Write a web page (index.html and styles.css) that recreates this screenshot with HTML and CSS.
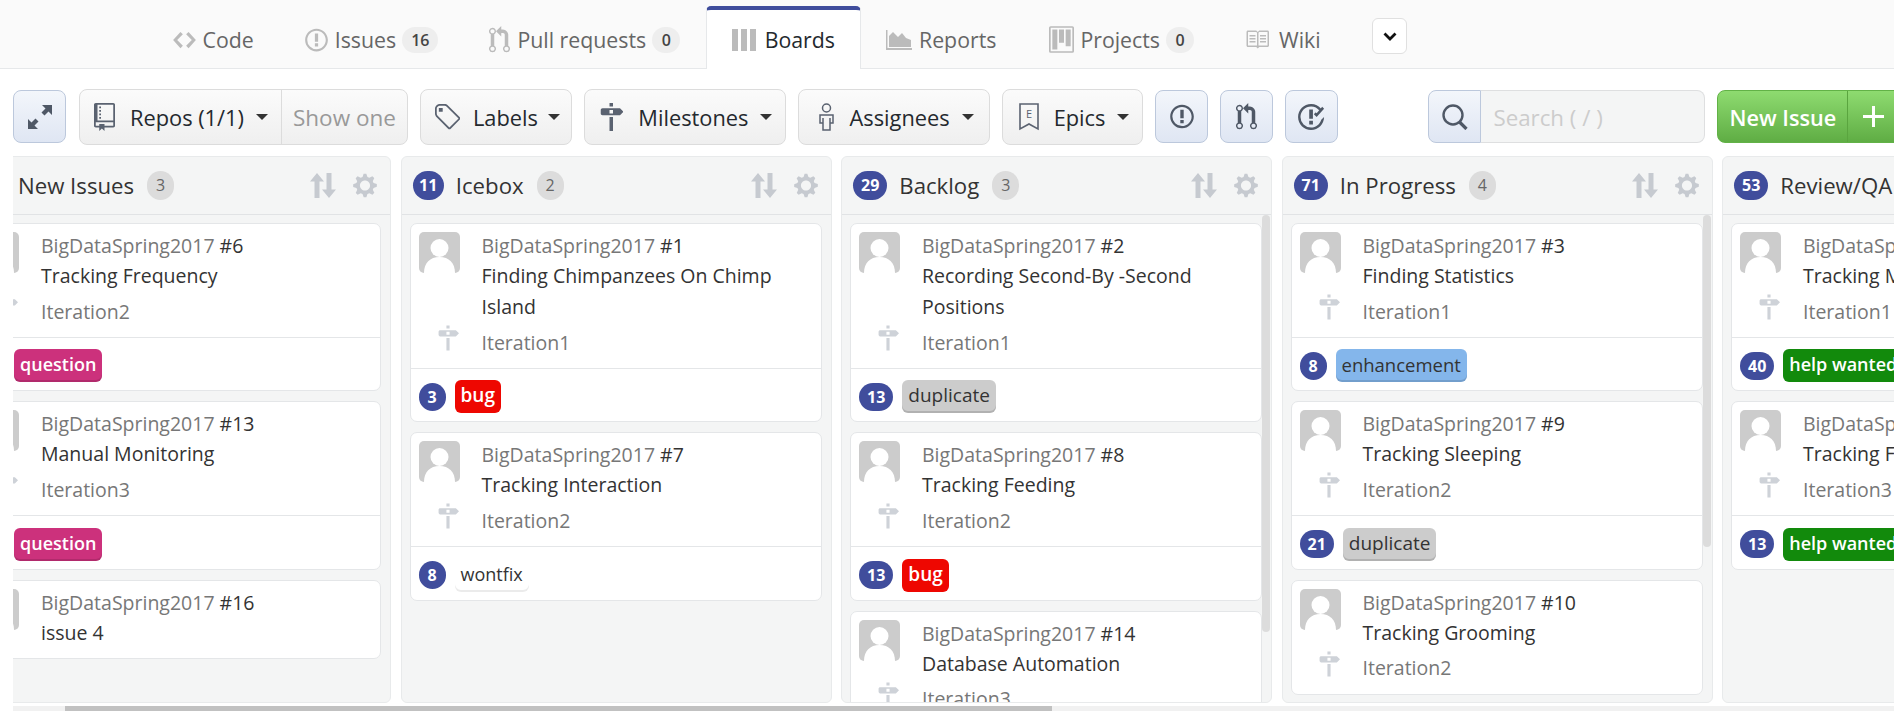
FILE: index.html
```html
<!DOCTYPE html>
<html lang="en">
<head>
  <meta charset="UTF-8">
  <title>Boards</title>
  <link rel="stylesheet" href="styles.css">
</head>
<body>

  <svg class="sprite" width="0" height="0">
    <symbol id="i-code" viewBox="0 0 14 16"><path d="M9.5 3L8 4.5 11.5 8 8 11.5 9.5 13 14 8 9.5 3zm-5 0L0 8l4.5 5L6 11.5 2.5 8 6 4.5 4.5 3z"/></symbol>
    <symbol id="i-issue" viewBox="0 0 14 16"><path d="M7 2.3c3.14 0 5.7 2.56 5.7 5.7s-2.56 5.7-5.7 5.7A5.71 5.71 0 0 1 1.3 8c0-3.14 2.56-5.7 5.7-5.7zM7 1C3.14 1 0 4.14 0 8s3.14 7 7 7 7-3.14 7-7-3.14-7-7-7zm1 3H6v5h2V4zm0 6H6v2h2v-2z"/></symbol>
    <symbol id="i-pull" viewBox="0 0 12 16"><path d="M11 11.28V5c-.03-.78-.34-1.47-.94-2.06C9.46 2.35 8.78 2.03 8 2H7V0L4 3l3 3V4h1c.27.02.48.11.69.31.21.2.3.42.31.69v6.28A1.993 1.993 0 0 0 10 15a1.993 1.993 0 0 0 1-3.72zm-1 2.92c-.66 0-1.2-.55-1.2-1.2 0-.65.55-1.2 1.2-1.2.65 0 1.2.55 1.2 1.2 0 .65-.55 1.2-1.2 1.2zM4 3c0-1.11-.89-2-2-2a1.993 1.993 0 0 0-1 3.72v6.56A1.993 1.993 0 0 0 2 15a1.993 1.993 0 0 0 1-3.72V4.72c.59-.34 1-.98 1-1.72zm-.8 10c0 .66-.55 1.2-1.2 1.2-.65 0-1.2-.55-1.2-1.2 0-.65.55-1.2 1.2-1.2.65 0 1.2.55 1.2 1.2zM2 4.2C1.34 4.2.8 3.65.8 3c0-.65.55-1.2 1.2-1.2.65 0 1.2.55 1.2 1.2 0 .65-.55 1.2-1.2 1.2z"/></symbol>
    <symbol id="i-boards" viewBox="0 0 24 22"><path d="M0 0h6v22H0zM9 0h6v22H9zM18 0h6v22h-6z"/></symbol>
    <symbol id="i-graph" viewBox="0 0 26 20"><path d="M0 0h1.500v18H26v2H0z"/><path d="M3 17V6l4-4 5 5 4-4 4 5 5 2v7z"/></symbol>
    <symbol id="i-project" viewBox="0 0 15 16"><path fill-rule="evenodd" d="M10 12h3V2h-3v10zm-4-2h3V2H6v8zm-4 4h3V2H2v12zm-1 1h13V1H1v14zM14 0H1a1 1 0 0 0-1 1v14a1 1 0 0 0 1 1h13a1 1 0 0 0 1-1V1a1 1 0 0 0-1-1z"/></symbol>
    <symbol id="i-book" viewBox="0 1 16 14"><path d="M3 5h4v1H3V5zm0 3h4V7H3v1zm0 2h4V9H3v1zm11-5h-4v1h4V5zm0 2h-4v1h4V7zm0 2h-4v1h4V9zm2-6v9c0 .55-.45 1-1 1H9.500l-1 1-1-1H2c-.55 0-1-.45-1-1V3c0-.55.45-1 1-1h5.500l1 1 1-1H15c.55 0 1 .45 1 1zm-8 .5L7.500 3H2v9h6V3.500zm7-.5H9.500l-.5.5V12h6V3z"/></symbol>
    <symbol id="i-repo" viewBox="0 0 12 16"><path d="M4 9H3V8h1v1zm0-3H3v1h1V6zm0-2H3v1h1V4zm0-2H3v1h1V2zm8-1v12c0 .55-.45 1-1 1H6v2l-1.500-1.500L3 16v-2H1c-.55 0-1-.45-1-1V1c0-.55.45-1 1-1h10c.55 0 1 .45 1 1zm-1 10H1v2h2v-1h3v1h5v-2zm0-10H2v9h9V1z"/></symbol>
    <symbol id="i-tag" viewBox="1 1 13 14"><path d="M7.730 1.730C7.260 1.260 6.620 1 5.960 1H3.500C2.130 1 1 2.130 1 3.500v2.470c0 .66.27 1.300.73 1.770l6.060 6.060c.39.39 1.020.39 1.410 0l4.590-4.590a.996.996 0 0 0 0-1.410L7.730 1.730zM2.380 7.090c-.31-.3-.47-.7-.47-1.130V3.500c0-.88.72-1.590 1.590-1.590h2.470c.42 0 .83.16 1.130.47l6.140 6.130-4.730 4.730-6.130-6.150zM3.010 3h2v2H3V3h.01z"/></symbol>
    <symbol id="i-milestone" viewBox="0 0 14 16"><path d="M8 2H6V0h2v2zm4 5H2c-.55 0-1-.45-1-1V4c0-.55.45-1 1-1h10l2 2-2 2zM8 4H6v2h2V4zM6 16h2V8H6v8z"/></symbol>
    <symbol id="i-person" viewBox="0 0 15 28"><g fill="none" stroke="currentColor" stroke-width="1.500"><circle cx="7.500" cy="5" r="4"/><path d="M1 12h13v8h-3v7H4v-7H1zM4 15v5M11 15v5"/></g></symbol>
    <symbol id="i-expand" viewBox="0 0 26 26"><path d="M15 1h10v10l-3.500-3.500-4 4-3-3 4-4zM11 25H1V15l3.500 3.500 4-4 3 3-4 4z"/></symbol>
    <symbol id="i-closed" viewBox="1 1 15 14"><path d="M7 10h2v2H7v-2zm2-6H7v5h2V4zm1.500 1.500l-1 1L11 8l4-4.500-1-1-3 3.500-1.500-1.500zM8 13.700A5.710 5.710 0 0 1 2.300 8c0-3.140 2.560-5.700 5.700-5.700 1.830 0 3.450.88 4.500 2.200l.92-.92A6.947 6.947 0 0 0 8 1C4.140 1 1 4.140 1 8s3.140 7 7 7 7-3.140 7-7l-1.520 1.520c-.66 2.410-2.860 4.190-5.480 4.190v-.01z"/></symbol>
    <symbol id="i-search" viewBox="0 0 26 26"><g fill="none" stroke="currentColor"><circle cx="11" cy="11" r="9.500" stroke-width="2.400"/><path d="M17.500 18l7 7" stroke-width="3.200"/></g></symbol>
    <symbol id="i-sort" viewBox="0 0 26 25"><path d="M7 0l7 8.500H9.500V25h-5V8.500H0zM19 25l7-8.500h-4.500V0h-5v16.500H12z"/></symbol>
    <symbol id="i-gear" viewBox="0 0 14 16"><path d="M14 8.770v-1.600l-1.940-.64-.45-1.090.88-1.840-1.130-1.130-1.810.91-1.090-.45-.69-1.920h-1.600l-.63 1.940-1.110.45-1.840-.88-1.130 1.130.91 1.810-.45 1.090L0 7.230v1.590l1.940.64.45 1.090-.88 1.840 1.130 1.130 1.810-.91 1.090.45.69 1.920h1.590l.63-1.940 1.110-.45 1.840.88 1.130-1.130-.92-1.810.47-1.090L14 8.750v.02zM7 11c-1.660 0-3-1.340-3-3s1.340-3 3-3 3 1.340 3 3-1.340 3-3 3z"/></symbol>
    <symbol id="i-avatar" viewBox="0 0 41 41"><rect width="41" height="41" rx="5" fill="#ccc"/><circle cx="20.500" cy="16" r="9" fill="#fff"/><path d="M5 41c0-10 6-16 15.500-16S36 31 36 41z" fill="#fff"/></symbol>
  </svg>

  <nav class="tabs">
    <a class="tab"><svg class="tab-icon w-code"><use href="#i-code"/></svg>Code</a>
    <a class="tab"><svg class="tab-icon w-issue"><use href="#i-issue"/></svg>Issues<span class="tab-count">16</span></a>
    <a class="tab"><svg class="tab-icon w-pull"><use href="#i-pull"/></svg>Pull requests<span class="tab-count">0</span></a>
    <a class="tab active"><svg class="tab-icon w-boards"><use href="#i-boards"/></svg>Boards</a>
    <a class="tab"><svg class="tab-icon w-graph"><use href="#i-graph"/></svg>Reports</a>
    <a class="tab"><svg class="tab-icon w-project"><use href="#i-project"/></svg>Projects<span class="tab-count">0</span></a>
    <a class="tab"><svg class="tab-icon w-book"><use href="#i-book"/></svg>Wiki</a>
    <button class="tab-more"><svg width="14" height="9" viewBox="0 0 14 9"><path d="M1.500 1.500L7 7l5.500-5.500" fill="none" stroke="#111" stroke-width="2.800"/></svg></button>
  </nav>

  <div class="toolbar">
    <button class="icon-btn expand-btn"><svg class="ic-expand"><use href="#i-expand"/></svg></button>
    <div class="btn repos">
      <span class="btn-main"><svg class="ic-repo"><use href="#i-repo"/></svg><span>Repos (1/1)</span><i class="caret"></i></span>
      <span class="btn-side">Show one</span>
    </div>
    <div class="btn"><span class="btn-main labels-main"><svg class="ic-tag"><use href="#i-tag"/></svg><span>Labels</span><i class="caret"></i></span></div>
    <div class="btn"><span class="btn-main"><svg class="ic-ms"><use href="#i-milestone"/></svg><span>Milestones</span><i class="caret"></i></span></div>
    <div class="btn"><span class="btn-main assignees-main"><svg class="ic-person"><use href="#i-person"/></svg><span>Assignees</span><i class="caret"></i></span></div>
    <div class="btn"><span class="btn-main">
      <svg class="ic-epic" viewBox="0 0 20 28"><path d="M1 1h18v25l-9-5-9 5z" fill="none" stroke="#5a6270" stroke-width="1.600"/><text x="10" y="15" text-anchor="middle" class="epic-letter">E</text></svg>
      <span>Epics</span><i class="caret"></i></span></div>
    <button class="icon-btn"><svg class="ic-issue"><use href="#i-issue"/></svg></button>
    <button class="icon-btn"><svg class="ic-pull"><use href="#i-pull"/></svg></button>
    <button class="icon-btn"><svg class="ic-closed"><use href="#i-closed"/></svg></button>
    <div class="search">
      <span class="search-icon"><svg class="ic-search"><use href="#i-search"/></svg></span>
      <span class="search-box">Search ( / )</span>
    </div>
    <div class="new-issue">
      <span class="new-text">New Issue</span>
      <span class="new-plus"><svg width="21" height="21" viewBox="0 0 21 21"><path d="M9 0h3v9h9v3h-9v9H9v-9H0V9h9z" fill="#fff"/></svg></span>
    </div>
  </div>

  <div class="board">

    <section class="column">
      <header class="col-head"><span class="pill pill-wide"></span><h3>New Issues</h3><span class="col-count">3</span><span class="col-tools"><svg class="ic-sort"><use href="#i-sort"/></svg><svg class="ic-gear"><use href="#i-gear"/></svg></span></header>
      <div class="cards">
        <article class="card">
          <div class="card-body">
            <svg class="avatar"><use href="#i-avatar"/></svg>
            <div class="card-text"><div class="repo">BigDataSpring2017 <b>#6</b></div><div class="title">Tracking Frequency</div></div>
            <svg class="ms-icon"><use href="#i-milestone"/></svg><div class="ms">Iteration2</div>
          </div>
          <div class="card-foot"><span class="pill"></span><span class="label l-question">question</span></div>
        </article>
        <article class="card">
          <div class="card-body">
            <svg class="avatar"><use href="#i-avatar"/></svg>
            <div class="card-text"><div class="repo">BigDataSpring2017 <b>#13</b></div><div class="title">Manual Monitoring</div></div>
            <svg class="ms-icon"><use href="#i-milestone"/></svg><div class="ms">Iteration3</div>
          </div>
          <div class="card-foot"><span class="pill"></span><span class="label l-question">question</span></div>
        </article>
        <article class="card plain">
          <div class="card-body">
            <svg class="avatar"><use href="#i-avatar"/></svg>
            <div class="card-text"><div class="repo">BigDataSpring2017 <b>#16</b></div><div class="title">issue 4</div></div>
          </div>
        </article>
      </div>
    </section>

    <section class="column">
      <header class="col-head"><span class="pill pill-thin">11</span><h3>Icebox</h3><span class="col-count">2</span><span class="col-tools"><svg class="ic-sort"><use href="#i-sort"/></svg><svg class="ic-gear"><use href="#i-gear"/></svg></span></header>
      <div class="cards">
        <article class="card">
          <div class="card-body">
            <svg class="avatar"><use href="#i-avatar"/></svg>
            <div class="card-text"><div class="repo">BigDataSpring2017 <b>#1</b></div><div class="title">Finding Chimpanzees On Chimp Island</div></div>
            <svg class="ms-icon"><use href="#i-milestone"/></svg><div class="ms">Iteration1</div>
          </div>
          <div class="card-foot"><span class="pill">3</span><span class="label l-bug">bug</span></div>
        </article>
        <article class="card">
          <div class="card-body">
            <svg class="avatar"><use href="#i-avatar"/></svg>
            <div class="card-text"><div class="repo">BigDataSpring2017 <b>#7</b></div><div class="title">Tracking Interaction</div></div>
            <svg class="ms-icon"><use href="#i-milestone"/></svg><div class="ms">Iteration2</div>
          </div>
          <div class="card-foot"><span class="pill">8</span><span class="label l-wontfix">wontfix</span></div>
        </article>
      </div>
    </section>

    <section class="column">
      <header class="col-head"><span class="pill">29</span><h3>Backlog</h3><span class="col-count">3</span><span class="col-tools"><svg class="ic-sort"><use href="#i-sort"/></svg><svg class="ic-gear"><use href="#i-gear"/></svg></span></header>
      <div class="cards">
        <article class="card">
          <div class="card-body">
            <svg class="avatar"><use href="#i-avatar"/></svg>
            <div class="card-text"><div class="repo">BigDataSpring2017 <b>#2</b></div><div class="title">Recording Second-By -Second Positions</div></div>
            <svg class="ms-icon"><use href="#i-milestone"/></svg><div class="ms">Iteration1</div>
          </div>
          <div class="card-foot"><span class="pill">13</span><span class="label l-duplicate">duplicate</span></div>
        </article>
        <article class="card">
          <div class="card-body">
            <svg class="avatar"><use href="#i-avatar"/></svg>
            <div class="card-text"><div class="repo">BigDataSpring2017 <b>#8</b></div><div class="title">Tracking Feeding</div></div>
            <svg class="ms-icon"><use href="#i-milestone"/></svg><div class="ms">Iteration2</div>
          </div>
          <div class="card-foot"><span class="pill">13</span><span class="label l-bug">bug</span></div>
        </article>
        <article class="card">
          <div class="card-body">
            <svg class="avatar"><use href="#i-avatar"/></svg>
            <div class="card-text"><div class="repo">BigDataSpring2017 <b>#14</b></div><div class="title">Database Automation</div></div>
            <svg class="ms-icon"><use href="#i-milestone"/></svg><div class="ms">Iteration3</div>
          </div>
        </article>
      </div>
      <div class="col-scroll thumb-backlog"></div>
    </section>

    <section class="column">
      <header class="col-head"><span class="pill">71</span><h3>In Progress</h3><span class="col-count">4</span><span class="col-tools"><svg class="ic-sort"><use href="#i-sort"/></svg><svg class="ic-gear"><use href="#i-gear"/></svg></span></header>
      <div class="cards">
        <article class="card">
          <div class="card-body">
            <svg class="avatar"><use href="#i-avatar"/></svg>
            <div class="card-text"><div class="repo">BigDataSpring2017 <b>#3</b></div><div class="title">Finding Statistics</div></div>
            <svg class="ms-icon"><use href="#i-milestone"/></svg><div class="ms">Iteration1</div>
          </div>
          <div class="card-foot"><span class="pill">8</span><span class="label l-enh">enhancement</span></div>
        </article>
        <article class="card">
          <div class="card-body">
            <svg class="avatar"><use href="#i-avatar"/></svg>
            <div class="card-text"><div class="repo">BigDataSpring2017 <b>#9</b></div><div class="title">Tracking Sleeping</div></div>
            <svg class="ms-icon"><use href="#i-milestone"/></svg><div class="ms">Iteration2</div>
          </div>
          <div class="card-foot"><span class="pill">21</span><span class="label l-duplicate">duplicate</span></div>
        </article>
        <article class="card">
          <div class="card-body">
            <svg class="avatar"><use href="#i-avatar"/></svg>
            <div class="card-text"><div class="repo">BigDataSpring2017 <b>#10</b></div><div class="title">Tracking Grooming</div></div>
            <svg class="ms-icon"><use href="#i-milestone"/></svg><div class="ms">Iteration2</div>
          </div>
        </article>
      </div>
      <div class="col-scroll thumb-progress"></div>
    </section>

    <section class="column">
      <header class="col-head"><span class="pill">53</span><h3>Review/QA</h3></header>
      <div class="cards">
        <article class="card">
          <div class="card-body">
            <svg class="avatar"><use href="#i-avatar"/></svg>
            <div class="card-text"><div class="repo">BigDataSpring2017</div><div class="title">Tracking M</div></div>
            <svg class="ms-icon"><use href="#i-milestone"/></svg><div class="ms">Iteration1</div>
          </div>
          <div class="card-foot"><span class="pill">40</span><span class="label l-help">help wanted</span></div>
        </article>
        <article class="card">
          <div class="card-body">
            <svg class="avatar"><use href="#i-avatar"/></svg>
            <div class="card-text"><div class="repo">BigDataSpring2017</div><div class="title">Tracking F</div></div>
            <svg class="ms-icon"><use href="#i-milestone"/></svg><div class="ms">Iteration3</div>
          </div>
          <div class="card-foot"><span class="pill">13</span><span class="label l-help">help wanted</span></div>
        </article>
      </div>
    </section>

  </div>

  <div class="hscroll"><div class="hscroll-thumb"></div></div>

</body>
</html>
```

FILE: styles.css
```css
* {
  box-sizing: border-box;
}
html, body {
  height: 711px;
  overflow: hidden;
}
body {
  margin: 0;
  background-color: #fff;
  color: #24292e;
  font-family: "Open Sans", "Noto Sans", sans-serif;
}
.sprite {
  position: absolute;
}

/* tabs */
.tabs {
  display: flex;
  height: 69px;
  padding-left: 147px;
  background-color: #fafafa;
  border-bottom: 1px solid #e6e8ea;
}
.tab {
  display: flex;
  align-items: center;
  height: 69px;
  padding: 10px 25.5px 0;
  font-size: 21.3px;
  color: #666;
  white-space: nowrap;
}
.tab.active {
  margin-top: 6px;
  height: 63px;
  padding: 0 24.5px 0 25px;
  background-color: #fff;
  color: #24292e;
  border: 1px solid #e6e8ea;
  border-top: 4px solid #3f4d9c;
  border-bottom: none;
  border-radius: 5px 5px 0 0;
}
.tab-icon {
  flex: none;
  margin-right: 7px;
  fill: #bbb;
}
.w-code { width: 23px; height: 26px; }
.w-issue { width: 23px; height: 26px; }
.w-pull { width: 21px; height: 28px; }
.w-boards { width: 24px; height: 22px; margin-right: 9px; }
.w-graph { width: 26px; height: 20px; }
.w-project { width: 25px; height: 27px; margin-left: 2px; margin-right: 6px; }
.w-book { width: 24px; height: 21px; margin-right: 10px; }
.tab-count {
  margin-left: 6px;
  min-width: 28px;
  height: 26px;
  padding: 0 9px;
  border-radius: 13px;
  background-color: #eee;
  color: #444;
  font-size: 16px;
  font-weight: 600;
  line-height: 26px;
  text-align: center;
}
.tab-more {
  align-self: flex-start;
  width: 35px;
  height: 36px;
  margin: 18px 0 0 26px;
  padding: 0;
  background-color: #fff;
  border: 1px solid #e0e0e0;
  border-radius: 6px;
}

/* toolbar */
.toolbar {
  display: flex;
  align-items: flex-start;
  height: 87px;
  padding: 20px 0 0 13px;
}
.btn {
  display: flex;
  flex: none;
  height: 56px;
  margin-right: 12px;
  background: linear-gradient(#fbfbfb, #efefef);
  border: 1px solid #dcdcdc;
  border-radius: 8px;
  font-size: 21.8px;
  font-weight: 500;
  color: #24292e;
}
.btn-main {
  display: flex;
  align-items: center;
  padding: 0 13px 0 14px;
  gap: 15px;
}
.labels-main {
  padding-right: 11px;
  gap: 13px;
}
.assignees-main {
  padding-right: 15px;
}
.btn-main svg {
  fill: #5a6270;
  color: #5a6270;
}
.btn-side {
  display: flex;
  align-items: center;
  padding: 0 11px;
  border-left: 1px solid #dcdcdc;
  color: #999;
  font-size: 22.5px;
  font-weight: 400;
}
.caret {
  width: 0;
  height: 0;
  margin-left: -3px;
  border-left: 6px solid transparent;
  border-right: 6px solid transparent;
  border-top: 6px solid #333;
}
.ic-repo { width: 21px; height: 28px; }
.ic-ms { width: 24.5px; height: 28px; }
.ic-tag { width: 25px; height: 27px; }
.ic-person { width: 15px; height: 28px; margin-left: 6px; }
.ic-epic { width: 20px; height: 28px; margin-left: 2px; }
.epic-letter {
  font-size: 11px;
  fill: #5a6270;
  stroke: none;
}
.icon-btn {
  display: flex;
  flex: none;
  align-items: center;
  justify-content: center;
  width: 53px;
  height: 53px;
  margin: 1px 12px 0 0;
  padding: 0;
  background: linear-gradient(#f3f6fb, #dfe6f3);
  border: 1px solid #bcc8dc;
  border-radius: 8px;
  fill: #4f5866;
}
.ic-expand { width: 26px; height: 26px; }
.ic-issue { width: 24px; height: 27px; }
.ic-pull { width: 21px; height: 28px; }
.ic-closed { width: 28px; height: 26px; }
.expand-btn {
  margin-right: 13px;
}
.search {
  display: flex;
  flex: none;
  width: 277px;
  height: 53px;
  margin: 1px 12px 0 78px;
}
.search-icon {
  display: flex;
  align-items: center;
  justify-content: center;
  width: 53px;
  background: linear-gradient(#f3f6fb, #dfe6f3);
  border: 1px solid #bcc8dc;
  border-radius: 8px 0 0 8px;
  color: #4f5866;
}
.ic-search { width: 26px; height: 26px; }
.search-box {
  flex: 1;
  padding-left: 12px;
  background-color: #f4f5f5;
  border: 1px solid #dedfe0;
  border-left: none;
  border-radius: 0 8px 8px 0;
  color: #ccc;
  font-size: 22.3px;
  line-height: 53px;
}
.new-issue {
  display: flex;
  flex: none;
  width: 190px;
  height: 53px;
  margin-top: 1px;
  background: linear-gradient(#8edb70, #5fad44);
  border: 1px solid #62b247;
  border-radius: 8px;
  color: #fff;
  font-size: 21.7px;
  font-weight: 600;
  line-height: 53px;
}
.new-text {
  width: 130px;
  text-align: center;
  border-right: 1px solid #5aa53f;
}
.new-plus {
  display: flex;
  align-items: center;
  padding-left: 15px;
}

/* board */
.board {
  display: flex;
  gap: 9.5px;
  height: 547px;
  margin-left: 13px;
  overflow: hidden;
}
.column {
  position: relative;
  flex: 0 0 431px;
  display: flex;
  flex-direction: column;
  background-color: #f4f5f5;
  border: 1px solid #e8eaeb;
  border-radius: 6px;
  overflow: hidden;
}
.column:first-child {
  margin-left: -53px;
}
.col-head {
  display: flex;
  flex: none;
  align-items: center;
  height: 58px;
  padding: 0 13px 0 11px;
  border-bottom: 1px solid #e1e3e5;
}
.col-head h3 {
  margin: 0 13px 0 12px;
  font-size: 22.2px;
  font-weight: 400;
  color: #333;
}
.pill {
  flex: none;
  min-width: 27px;
  padding: 0 8px;
  height: 29px;
  border-radius: 15px;
  background-color: #404d9c;
  color: #fff;
  font-size: 16px;
  font-weight: 700;
  line-height: 29px;
  text-align: center;
}
.pill-wide {
  min-width: 34px;
}
.pill-thin {
  padding: 0 6.5px;
}
.col-count {
  width: 27px;
  height: 29px;
  border-radius: 15px;
  background-color: #dcdcdc;
  color: #666;
  font-size: 16px;
  line-height: 29px;
  text-align: center;
}
.col-tools {
  display: flex;
  align-items: center;
  gap: 17px;
  margin-left: auto;
  fill: #c6cad0;
}
.ic-sort { width: 26px; height: 25px; }
.ic-gear { width: 24px; height: 27px; }
.cards {
  flex: 1;
  padding: 8px 10px 0 8px;
  overflow: hidden;
}
.card {
  width: 412px;
  margin-bottom: 10px;
  background-color: #fff;
  border: 1px solid #e4e6e8;
  border-radius: 7px;
}
.card-body {
  display: grid;
  grid-template-columns: 63px 1fr;
  padding: 8px 9px 10.5px 8px;
  font-size: 19.5px;
  line-height: 31px;
}
.avatar {
  width: 41px;
  height: 41px;
}
.card-text {
  margin-top: -1px;
}
.repo {
  line-height: 29px;
  color: #777;
}
.repo b {
  color: #333;
  font-weight: 400;
}
.title {
  color: #333;
}
.ms-icon {
  width: 22px;
  height: 26px;
  margin: 3px 0 0 18px;
  fill: #ced2d8;
}
.ms {
  margin-top: 4.5px;
  color: #777;
}
.plain .card-body {
  padding-bottom: 10px;
}
.card-foot {
  display: flex;
  align-items: center;
  gap: 9px;
  height: 53.4px;
  padding: 3px 0 0 8px;
  border-top: 1px solid #e4e6e8;
}
.card-foot .pill {
  height: 28px;
  line-height: 28px;
}
.label {
  height: 33px;
  padding: 0 6px;
  border-radius: 6px;
  box-shadow: inset 0 -2px 0 rgba(0, 0, 0, 0.13);
  font-size: 18px;
  font-weight: 600;
  line-height: 31px;
  white-space: nowrap;
}
.l-question { background-color: #cc317c; color: #fff; }
.l-bug { background-color: #ee0701; color: #fff; box-shadow: none; font-size: 19px; }
.l-duplicate { background-color: #cccccc; color: #333; font-weight: 500; font-size: 19px; }
.l-enh { background-color: #84b6eb; color: #333; font-weight: 500; font-size: 18.5px; }
.l-help { background-color: #128a0c; color: #fff; box-shadow: none; }
.l-wontfix { background-color: #fff; color: #333; font-weight: 500; box-shadow: inset 0 -2px 0 rgba(0, 0, 0, 0.08); }
.col-scroll {
  position: absolute;
  top: 58px;
  right: 1px;
  width: 8px;
  background-color: #dcdcdc;
  border-radius: 4px;
}
.thumb-backlog { height: 417px; }
.thumb-progress { height: 332px; }

/* bottom scrollbar */
.hscroll {
  height: 5px;
  margin: 3px 0 0 13px;
  background-color: #f1f1f1;
}
.hscroll-thumb {
  width: 987px;
  height: 5px;
  margin-left: 52px;
  background-color: #c1c1c1;
}
```
